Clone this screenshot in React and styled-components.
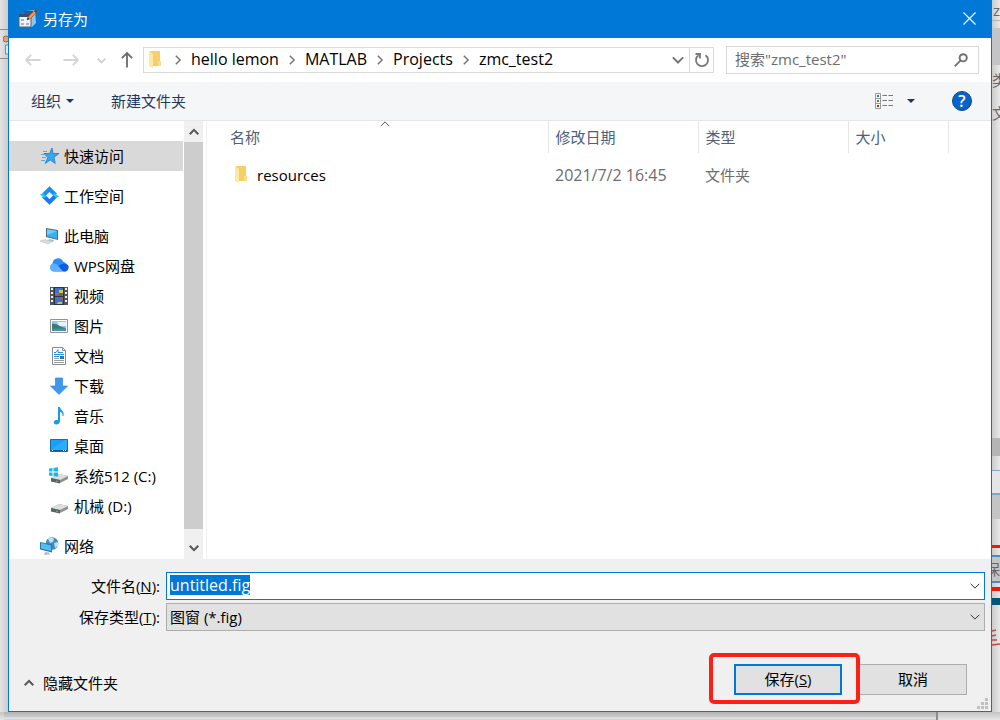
import React, { useEffect, useRef, useState } from 'react';
import styled, { createGlobalStyle, css } from 'styled-components';

const blue = '#0078d7';
const lightGray = '#f0f0f0';
const line = '#d9d9d9';
const navy = '#1e395b';

const GlobalStyle = createGlobalStyle`
  * {
    box-sizing: border-box;
  }
  body {
    margin: 0;
    background: #e2e2e2;
    color: #000;
    font: 15px/20px 'Open Sans', 'Noto Sans CJK SC', sans-serif;
  }
  button, input, select {
    font: inherit;
    color: inherit;
    margin: 0;
  }
  button {
    border: 0;
    padding: 0;
    background: none;
  }
  svg {
    display: block;
    flex: none;
  }
`;

const Desktop = styled.div`
  display: grid;
  grid-template-columns: 8px minmax(0, 1fr) 8px;
  grid-template-rows: minmax(0, 1fr) 8px;
  height: 100vh;
  min-height: 600px;
`;

const Edge = styled.div`
  display: flex;
  flex-direction: column;
  overflow: hidden;
  background: linear-gradient(to right, #e4e4e4, #cbcbcb);
`;

const RightEdge = styled(Edge)`
  background: linear-gradient(to right, #cbcbcb, #e8e8e8);
`;

const Strip = styled.span`
  display: flex;
  flex: 0 0 ${p => p.$size}px;
  align-items: center;
  justify-content: ${p => (p.$end ? 'flex-end' : 'flex-start')};
  overflow: hidden;
  background: ${p => p.$color || 'transparent'};
  color: #666;
  white-space: nowrap;
`;

const BottomEdge = styled.div`
  grid-column: 1 / -1;
  display: grid;
  grid-template-columns: minmax(0, 938fr) 62fr;
  background: linear-gradient(#c4c4c4, #e6e6e6);
`;

const BackWindow = styled.span`
  margin-left: 4px;
  border-right: 2px solid #8d8d8d;
  background: linear-gradient(#b2b2b2, #cbcbcb 5px, #e9e9e9 6px, #d5d5d5 7px);
`;

const Dialog = styled.main`
  position: relative;
  display: flex;
  flex-direction: column;
  border: 1px solid ${blue};
  background: #fff;
`;

const TitleBar = styled.header`
  display: flex;
  align-items: center;
  gap: 5px;
  height: 37px;
  padding: 0 15px 2px 9px;
  background: ${blue};
  color: #fff;
`;

const Title = styled.h1`
  flex: 1;
  margin: 0;
  font: inherit;
`;

const NavBar = styled.nav`
  display: flex;
  align-items: center;
  height: 44px;
  padding: 0 12px 0 15px;
`;

const History = styled.div`
  display: flex;
  align-items: center;
  margin-right: 7px;
`;

const HistoryButton = styled.button`
  margin-left: ${p => p.$gap || 0}px;
`;

const Address = styled.div`
  flex: 1;
  display: flex;
  align-items: center;
  height: 26px;
  min-width: 0;
  padding-left: 3px;
  border: 1px solid ${line};
`;

const CrumbRow = styled.div`
  flex: 1;
  display: flex;
  align-items: center;
  min-width: 0;
  padding-left: 10px;
  overflow: hidden;
`;

const Crumb = styled.button`
  margin: 0 8px;
  padding-bottom: 3px;
  font-size: 16px;
  white-space: nowrap;
`;

const Spacer = styled.span`
  flex: 1;
`;

const Reload = styled.button`
  display: flex;
  align-items: center;
  justify-content: center;
  width: 24px;
  height: 24px;
  margin-left: 5px;
  border-left: 1px solid ${line};
`;

const Search = styled.label`
  display: flex;
  align-items: center;
  width: 253px;
  height: 28px;
  margin-left: 12px;
  padding: 0 10px 0 8px;
  border: 1px solid ${line};
  input {
    flex: 1;
    min-width: 0;
    padding: 0 0 2px;
    border: 0;
    outline: 0;
    background: none;
    &::placeholder {
      color: #6d6d6d;
      opacity: 1;
    }
  }
`;

const Toolbar = styled.div`
  display: flex;
  align-items: center;
  height: 39px;
  padding: 0 19px 0 22px;
  background: #f5f6f7;
  border-bottom: 1px solid #e5e6e8;
  color: ${navy};
`;

const ToolButton = styled.button`
  display: flex;
  align-items: center;
  gap: 5px;
  margin-right: ${p => p.$gap || 0}px;
`;

const Help = styled.button`
  width: 20px;
  height: 20px;
  border: 1px solid #0a4a8c;
  border-radius: 50%;
  background: #0a63c9;
  color: #fff;
  font-size: 16px;
  font-weight: 600;
  line-height: 18px;
`;

const Body = styled.div`
  flex: 1;
  display: flex;
  min-height: 0;
`;

const Tree = styled.ul`
  width: 175px;
  margin: 0;
  padding: 20px 1px 0 0;
  overflow: hidden;
  list-style: none;
`;

const TreeItem = styled.li`
  margin-bottom: ${p => (p.$last ? 10 : 0)}px;
  button {
    display: flex;
    align-items: center;
    gap: 5px;
    width: 100%;
    height: 30px;
    padding-left: ${p => (p.$child ? 41 : 31)}px;
    background: ${p => (p.$active ? '#d9d9d9' : 'transparent')};
    white-space: nowrap;
  }
`;

const ScrollBar = styled.div`
  display: flex;
  flex-direction: column;
  width: 19px;
  background: ${lightGray};
  button {
    display: flex;
    align-items: center;
    justify-content: center;
    height: 21px;
  }
  button:last-child {
    height: 30px;
    padding-top: 7px;
  }
`;

const Thumb = styled.div`
  flex: 1;
  background: #cdcdcd;
`;

const Files = styled.section`
  flex: 1;
  min-width: 0;
  margin-left: 3px;
  border-left: 1px solid #f2f2f2;
`;

const Table = styled.table`
  width: 100%;
  border-collapse: collapse;
  table-layout: fixed;
  th, td {
    padding: 0 7px;
    text-align: left;
    font-weight: 400;
    color: #6d6d6d;
  }
  th {
    height: 32px;
    border-right: 1px solid #e5e5e5;
    color: #4c607a;
  }
  th:last-child {
    border: 0;
  }
  th:first-child {
    padding-left: 23px;
  }
  td {
    height: 30px;
  }
  td:first-child {
    padding-left: 26px;
    color: #000;
  }
  tbody::before {
    content: '';
    display: block;
    height: 7px;
  }
`;

const SortHeader = styled.div`
  position: relative;
  svg {
    position: absolute;
    left: 150px;
    top: -8px;
  }
`;

const FileName = styled.span`
  display: flex;
  align-items: center;
  gap: 8px;
`;

const DateText = styled.time`
  font-size: 16px;
`;

const Footer = styled.footer`
  height: 152px;
  padding: 13px 6px 16px 15px;
  display: flex;
  flex-direction: column;
  background: ${lightGray};
`;

const Field = styled.div`
  display: flex;
  align-items: center;
  margin-bottom: 3px;
  label {
    width: 137px;
    margin-right: 5px;
    padding-right: 1px;
    text-align: right;
    white-space: nowrap;
  }
`;

const control = css`
  flex: 1;
  display: flex;
  align-items: center;
  min-width: 0;
  height: 28px;
  padding: 0 4px 0 3px;
`;

const ComboBox = styled.div`
  ${control}
  border: 1px solid ${blue};
  background: #fff;
  input {
    flex: 1;
    min-width: 0;
    padding: 0 0 2px;
    border: 0;
    outline: 0;
    background: none;
    font-size: 16px;
    &::selection {
      background: ${blue};
      color: #fff;
    }
  }
`;

const SelectBox = styled.div`
  ${control}
  border: 1px solid #adadad;
  background: #e1e1e1;
  select {
    flex: 1;
    min-width: 0;
    padding: 0;
    border: 0;
    outline: 0;
    appearance: none;
    background: none;
  }
`;

const Actions = styled.div`
  display: flex;
  align-items: center;
  justify-content: space-between;
  margin-top: auto;
  padding-right: 18px;
`;

const HideFolders = styled.button`
  display: flex;
  align-items: center;
  gap: 9px;
  padding-top: 6px;
`;

const Buttons = styled.div`
  display: flex;
  gap: 17px;
`;

const Button = styled.button`
  width: 108px;
  height: 31px;
  padding-bottom: 2px;
  border: ${p => (p.$primary ? `2px solid ${blue}` : '1px solid #adadad')};
  background: #e1e1e1;
`;

const Marked = styled.div`
  position: relative;
  &::after {
    content: '';
    position: absolute;
    inset: -11px -18px -9px -25px;
    border: 4px solid #ff2015;
    border-radius: 5px;
    pointer-events: none;
  }
`;

const Grip = styled.svg`
  position: absolute;
  right: 3px;
  bottom: 2px;
`;

const Chevron = ({ dir = 'down', size = 10, color = '#555', width = 1.5 }) => {
  const turn = { down: 0, left: 90, up: 180, right: 270 }[dir];
  return (
    <svg width={size} height={size} viewBox="0 0 10 10" fill="none" stroke={color} strokeWidth={width}>
      <path d="M0.7 2.8 5 7.1 9.3 2.8" transform={`rotate(${turn} 5 5)`} />
    </svg>
  );
};

const Arrow = ({ dir = 'left', color = '#d5d5d5' }) => {
  const turn = { left: 0, up: 90, right: 180 }[dir];
  return (
    <svg width="18" height="18" viewBox="0 0 18 18" fill="none" stroke={color} strokeWidth="1.8">
      <path d="M16.5 9H2.2M7.2 3.8 2 9l5.2 5.2" transform={`rotate(${turn} 9 9)`} />
    </svg>
  );
};

const Caret = () => (
  <svg width="8" height="4" viewBox="0 0 8 4" fill={navy}>
    <path d="M0 0h8L4 4z" />
  </svg>
);

const Folder = () => (
  <svg width="16" height="18" viewBox="0 0 16 18">
    <path d="M3 0h10v15H3z" fill="#f5cf6b" />
    <path d="M11 10h3v5h-3z" fill="#fbdc83" />
    <path d="m2 0 4 3v14L2 15z" fill="#ffe8a2" />
  </svg>
);

const AppIcon = () => (
  <svg width="20" height="20" viewBox="0 0 20 20">
    <path d="m8 2 9-1 1 13-4 4H8z" fill="#8fc3f0" />
    <path d="M6 2h9v6H6z" fill="#2c568d" />
    <path d="M1 5h12v13H1z" fill="#eef2f7" stroke="#5b6574" />
    <path d="M1 5h12v3H1z" fill="#324f78" />
    <path d="M3 10h3v2H3zM3 14h3v2H3zM8 14h3v2H8z" fill="#a8b4c5" />
    <path d="m9 11 1-3 6-6 2 2-6 6z" fill="#ee9b46" stroke="#a1502a" strokeWidth=".6" />
    <path d="m16 2 1.5-1.5L19.500 2 18 4z" fill="#94342c" />
    <path d="m9 11 .8-2.5 1.6 1.2z" fill="#292929" />
  </svg>
);

const ViewIcon = () => (
  <svg width="19" height="16" viewBox="0 0 19 16" fill="none" stroke="#9a9a9a">
    <path d="M.5.5h5v15h-5zM.5 5.5h5M.5 10.5h5" />
    <path d="M7.5 2.5H12M13.5 2.5H18M7.5 7.5H12M13.5 7.5H18M7.5 12.5H12M13.5 12.5H18" stroke="#777" />
    <path d="M2 2h2v2H2z" fill="#257b96" stroke="none" />
    <path d="M2 7h2v2H2z" fill="#8d7320" stroke="none" />
    <path d="M2 12h2v2H2z" fill="#b02a18" stroke="none" />
  </svg>
);

const ReloadIcon = () => (
  <svg width="16" height="16" viewBox="0 0 16 16" fill="none" stroke="#777" strokeWidth="1.8">
    <path d="M11.5 3.3A6 6 0 1 1 4.5 3.3" />
    <path d="M1.500 2H6v4.5" />
  </svg>
);

const SearchIcon = () => (
  <svg width="14" height="14" viewBox="0 0 14 14" fill="none" stroke="#707070" strokeWidth="1.9">
    <circle cx="9.2" cy="4.8" r="3.6" />
    <path d="M6.4 7.6.7 13.3" />
  </svg>
);

const drive = (
  <>
    <path d="m1 11 8-4 9 2v3l-8 4-9-2z" fill="#8f9090" />
    <path d="m1 11 8-4 9 2-8 4z" fill="#dedede" />
    <path d="m1 11 9 2v3.5L1 14.5z" fill="#606262" />
    <path d="m6 13.5 2 .4v1.2l-2-.4z" fill="#39d353" />
  </>
);

const icons = {
  quick: (
    <>
      <path d="m12 1 1.2 5.500H19l-5 3.700 1.200 6.300-5-3.500-5 3.500 2.600-6L4 6.500h5.500z" fill="#35a8ef" stroke="#1673b4" strokeWidth=".7" />
      <path d="M3 4.500h4M1 7.500h4M2 10.500h4M1 13.500h4" stroke="#58a9dc" />
    </>
  ),
  work: (
    <>
      <path d="M3.500 8 9.500 2l6 6" fill="none" stroke="#178eff" strokeWidth="4" />
      <path d="m3.500 9 6 6 6-6" fill="none" stroke="#1677ff" strokeWidth="4" />
      <path d="M0 7.500 3 6l3.500 3.500-2 1.500z" fill="#1bcbe8" />
      <path d="m19 9.500-3 1.500-3.500-3.500 2-1.500z" fill="#1bcbe8" />
    </>
  ),
  pc: (
    <>
      <path d="m6 1 12 2v10L6 10z" fill="#536879" />
      <path d="m7 2.2 10 1.700v7.800L7 9.2z" fill="#38b1f3" />
      <path d="m7 2.2 10 1.700-10 4z" fill="#73cbfa" />
      <path d="m9 12 5 1-1 2-5-1z" fill="#aebbc3" />
      <path d="m0 14 5-1.5 7 2-4 2.5z" fill="#d7dcdf" stroke="#b8bdc1" strokeWidth=".5" />
    </>
  ),
  cloud: (
    <>
      <path d="M4 14.500a4 4 0 0 1-1.500-7.500A5.500 5.500 0 0 1 13 4.500C16 6 19 8 18.500 11c-.5 2.500-2 3.500-4 3.500z" fill="#2c8cf8" />
      <path d="M4 14.500a4 4 0 0 1 0-8c3 0 5 3 9 8z" fill="#5fb0ff" />
      <path d="M8.500 9.500c3-3.500 7-3.500 10-.5 0 4-1.500 5.500-4 5.500-2.500 0-3-3-6-5z" fill="#0f5ce0" />
    </>
  ),
  video: (
    <>
      <path d="M0 0h18v18H0z" fill="#555" />
      <path d="M4 0h10v18H4z" fill="#2a3350" />
      <path d="M5 1h8v8H5zM5 10h8v7H5z" fill="#3d73d0" />
      <path d="M1 1h2v2H1zm0 4h2v2H1zm0 4h2v2H1zm0 4h2v2H1zm14-12h2v2h-2zm0 4h2v2h-2zm0 4h2v2h-2zm0 4h2v2h-2z" fill="#eee" />
      <path d="M9 3h4v3H9z" fill="#ddc530" />
      <path d="M5 6h4v2H5z" fill="#df5340" />
      <path d="M9 6h3v2H9z" fill="#238250" />
      <path d="M10 10h3v2h-2z" fill="#d6492d" />
      <path d="M8 15h4v2H7z" fill="#edb72c" />
    </>
  ),
  image: (
    <>
      <path d="M.5 2.500h17v13H.5z" fill="#fff" stroke="#929292" />
      <path d="M2 4h14v10H2z" fill="#8dcaf2" />
      <path d="M7 5h9v4H9z" fill="#e3f5fb" />
      <path d="M2 7c5-1 7 3 14 4v3H2z" fill="#3f7974" />
      <path d="M2 12c5-1 10 0 14-1v3H2z" fill="#4d8cae" />
    </>
  ),
  doc: (
    <>
      <path d="M2.500.5h10l3 3v14h-13z" fill="#fff" stroke="#8d8d8d" />
      <path d="M12.500.5v3h3" fill="none" stroke="#8d8d8d" />
      <path d="M4 5.500h2l2-3v3h5M4 7.500h10M4 9.500h5" fill="none" stroke="#2891dc" />
      <path d="M4 11.500h5M4 13.500h10M4 15.500h10" stroke="#9b9b9b" />
      <path d="M10 9h4v3h-4z" fill="#2878b5" />
    </>
  ),
  download: <path d="M5.500 1h7v8h5L9 17.500.5 9h5z" fill="#3f98ee" stroke="#217acb" strokeWidth=".6" />,
  music: <path d="M8 0h2c0 3 5 4 3.500 9h-1c.5-3-1-4-2.500-4v9c0 2.500-2 3.500-3.800 3.500C3 17.500 3 13.500 6 13c.8-.1 1.500 0 2 .2z" fill="#149dec" />,
  desktop: (
    <>
      <path d="M.5 2.500h17v12H.5z" fill="#1aa0fa" stroke="#0c70b7" />
      <path d="m1 13 14-10h2v10z" fill="#2fabff" />
      <path d="M1 13h16v1H1z" fill="#085c9b" />
      <path d="M2 13h1v1H2zM13 13h1v1h-1zM15 13h1v1h-1z" fill="#fff" />
    </>
  ),
  system: (
    <>
      {drive}
      <path d="m-1 1.500 3.500-.5v3.500H-1zM3.500 1 8 .3v4.200H3.500zM-1 5.500h3.500V9L-1 8.500zM3.500 5.500H8v4.200L3.500 9z" fill="#19b5ec" />
    </>
  ),
  disk: drive,
  network: (
    <>
      <circle cx="12" cy="6.500" r="6.300" fill="#3c8dbd" />
      <path d="M8 2c3-2 5-1 6 0l-1 3-3 1zM14 6l4-1v4l-3 2z" fill="#bfe0ef" />
      <path d="m0 5 12 2.500v8L0 12.500z" fill="#2d79ac" />
      <path d="m1 6 10 2.500v5.500L1 11.500z" fill="#50bdf5" />
      <path d="m5 15 4 .5 1 2-6 .5z" fill="#b5bec3" />
    </>
  ),
};

const Icon = ({ name }) => (
  <svg width="19" height="19" viewBox="0 0 19 19" overflow="visible">
    {icons[name]}
  </svg>
);

const places = [
  { icon: 'quick', label: '快速访问', active: true, last: true },
  { icon: 'work', label: '工作空间', last: true },
  { icon: 'pc', label: '此电脑' },
  { icon: 'cloud', label: 'WPS网盘', child: true },
  { icon: 'video', label: '视频', child: true },
  { icon: 'image', label: '图片', child: true },
  { icon: 'doc', label: '文档', child: true },
  { icon: 'download', label: '下载', child: true },
  { icon: 'music', label: '音乐', child: true },
  { icon: 'desktop', label: '桌面', child: true },
  { icon: 'system', label: '系统512 (C:)', child: true },
  { icon: 'disk', label: '机械 (D:)', child: true, last: true },
  { icon: 'network', label: '网络' },
];

const crumbs = ['hello lemon', 'MATLAB', 'Projects', 'zmc_test2'];

const App = () => {
  const nameInput = useRef(null);
  const [name, setName] = useState('untitled.fig');

  useEffect(() => {
    nameInput.current.focus();
    nameInput.current.select();
  }, []);

  return (
    <Desktop>
      <GlobalStyle />
      <Edge>
        <Strip $size={29} />
        <Strip $size={1} $color="#8c8c8c" />
        <Strip $size={28} $end>
          <svg width="5" height="24" viewBox="0 0 5 24">
            <circle cx="3" cy="7" r="3" fill="#e0a070" stroke="#b8623c" />
            <path d="M5 13H2.500v9H5" fill="#dbe8f7" stroke="#5b8fd0" />
          </svg>
        </Strip>
        <Strip $size={1} $color="#8c8c8c" />
      </Edge>
      <Dialog>
        <TitleBar>
          <AppIcon />
          <Title>另存为</Title>
          <button aria-label="关闭">
            <svg width="13" height="13" viewBox="0 0 13 13" stroke="#fff" strokeWidth="1.2">
              <path d="m.5.5 12 12M12.5.5l-12 12" />
            </svg>
          </button>
        </TitleBar>

        <NavBar>
          <History>
            <HistoryButton aria-label="后退"><Arrow /></HistoryButton>
            <HistoryButton aria-label="前进" $gap={20}><Arrow dir="right" /></HistoryButton>
            <HistoryButton aria-label="最近" $gap={17}><Chevron color="#d0d0d0" size={9} width={2} /></HistoryButton>
            <HistoryButton aria-label="向上" $gap={12}><Arrow dir="up" color="#6b6b6b" /></HistoryButton>
          </History>
          <Address>
            <Folder />
            <CrumbRow>
              {crumbs.map(crumb => (
                <React.Fragment key={crumb}>
                  <Chevron dir="right" color="#777" />
                  <Crumb>{crumb}</Crumb>
                </React.Fragment>
              ))}
            </CrumbRow>
            <button aria-label="历史路径"><Chevron size={12} color="#777" width={1.7} /></button>
            <Reload aria-label="刷新"><ReloadIcon /></Reload>
          </Address>
          <Search>
            <input aria-label="搜索" placeholder={'搜索"zmc_test2"'} />
            <SearchIcon />
          </Search>
        </NavBar>

        <Toolbar>
          <ToolButton $gap={37}>组织 <Caret /></ToolButton>
          <ToolButton>新建文件夹</ToolButton>
          <Spacer />
          <ToolButton aria-label="视图" $gap={13}><ViewIcon /></ToolButton>
          <ToolButton aria-label="更多视图" $gap={37}><Caret /></ToolButton>
          <Help aria-label="帮助">?</Help>
        </Toolbar>

        <Body>
          <Tree>
            {places.map(p => (
              <TreeItem key={p.label} $child={p.child} $active={p.active} $last={p.last}>
                <button>
                  <Icon name={p.icon} />
                  {p.label}
                </button>
              </TreeItem>
            ))}
          </Tree>
          <ScrollBar>
            <button aria-label="向上滚动"><Chevron dir="up" width={2} /></button>
            <Thumb />
            <button aria-label="向下滚动"><Chevron width={2} /></button>
          </ScrollBar>
          <Files>
            <Table>
              <colgroup>
                <col />
                <col width="150" />
                <col width="150" />
                <col width="100" />
                <col width="43" />
              </colgroup>
              <thead>
                <tr>
                  <th><SortHeader>名称<Chevron dir="up" width={1} /></SortHeader></th>
                  <th>修改日期</th>
                  <th>类型</th>
                  <th>大小</th>
                  <th />
                </tr>
              </thead>
              <tbody>
                <tr>
                  <td><FileName><Folder />resources</FileName></td>
                  <td><DateText>2021/7/2 16:45</DateText></td>
                  <td>文件夹</td>
                  <td />
                  <td />
                </tr>
              </tbody>
            </Table>
          </Files>
        </Body>

        <Footer>
          <Field>
            <label htmlFor="file-name">文件名(<u>N</u>):</label>
            <ComboBox>
              <input id="file-name" ref={nameInput} value={name} onChange={e => setName(e.target.value)} />
              <Chevron width={1} color="#333" />
            </ComboBox>
          </Field>
          <Field>
            <label htmlFor="file-type">保存类型(<u>T</u>):</label>
            <SelectBox>
              <select id="file-type">
                <option>图窗 (*.fig)</option>
              </select>
              <Chevron width={1} color="#333" />
            </SelectBox>
          </Field>
          <Actions>
            <HideFolders><Chevron dir="up" width={2} />隐藏文件夹</HideFolders>
            <Buttons>
              <Marked>
                <Button $primary>保存(<u>S</u>)</Button>
              </Marked>
              <Button>取消</Button>
            </Buttons>
          </Actions>
        </Footer>
        <Grip width="11" height="11" fill="#bfbfbf">
          <path d="M8 0h3v3H8zM4 4h3v3H4zM8 4h3v3H8zM0 8h3v3H0zM4 8h3v3H4zM8 8h3v3H8z" />
        </Grip>
      </Dialog>
      <RightEdge>
        <Strip $size={20} $end>z</Strip>
        <Strip $size={1} $color="#b5b5b5" />
        <Strip $size={7} />
        <Strip $size={37} $color="#c4c4c6" />
        <Strip $size={5} />
        <Strip $size={20}>类</Strip>
        <Strip $size={13} />
        <Strip $size={20}>文</Strip>
        <Strip $size={315} />
        <Strip $size={18} $color="#b5b5b5" />
        <Strip $size={14} />
        <Strip $size={1} $color="#79a9d1" />
        <Strip $size={22} $color="#e5e5e5" />
        <Strip $size={2} $color="#79a9d1" />
        <Strip $size={24} $color="#c4c4c4" />
        <Strip $size={26} />
        <Strip $size={3} $color="#e8190f" />
        <Strip $size={7} />
        <Strip $size={2} $color="#4c8cc4" />
        <Strip $size={24} $color="#c4c4c4" $end>保</Strip>
        <Strip $size={2} $color="#4c8cc4" />
        <Strip $size={4} />
        <Strip $size={4} $color="#e8190f" />
        <Strip $size={7} />
        <Strip $size={7} $color="#00537a" />
        <Strip $size={24} />
        <Strip $size={18}>
          <svg width="8" height="18" viewBox="0 0 8 18" fill="none" stroke="#c04848" strokeWidth="1.5">
            <path d="M0 2l4-1M0 7l4-1M0 11h5M0 16l8-1" />
          </svg>
        </Strip>
      </RightEdge>
      <BottomEdge><BackWindow /></BottomEdge>
    </Desktop>
  );
};

export default App;
